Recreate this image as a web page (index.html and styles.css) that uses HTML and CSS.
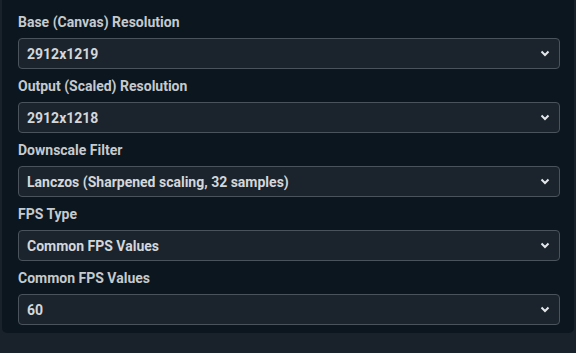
FILE: index.html
```html
<!doctype html>
<html>
<head>
<meta charset="utf-8">
<link rel="stylesheet" href="styles.css">
<title>Video Settings</title>
</head>
<body>
<div class="panel">
  <div class="field">
    <div class="label">Base (Canvas) Resolution</div>
    <div class="select"><span>2912x1219</span><svg class="chev" viewBox="0 0 10 7"><path d="M1.5 1.5 L5 5 L8.5 1.5"/></svg></div>
  </div>
  <div class="field">
    <div class="label">Output (Scaled) Resolution</div>
    <div class="select"><span>2912x1218</span><svg class="chev" viewBox="0 0 10 7"><path d="M1.5 1.5 L5 5 L8.5 1.5"/></svg></div>
  </div>
  <div class="field">
    <div class="label">Downscale Filter</div>
    <div class="select"><span>Lanczos (Sharpened scaling, 32 samples)</span><svg class="chev" viewBox="0 0 10 7"><path d="M1.5 1.5 L5 5 L8.5 1.5"/></svg></div>
  </div>
  <div class="field">
    <div class="label">FPS Type</div>
    <div class="select"><span>Common FPS Values</span><svg class="chev" viewBox="0 0 10 7"><path d="M1.5 1.5 L5 5 L8.5 1.5"/></svg></div>
  </div>
  <div class="field">
    <div class="label">Common FPS Values</div>
    <div class="select"><span>60</span><svg class="chev" viewBox="0 0 10 7"><path d="M1.5 1.5 L5 5 L8.5 1.5"/></svg></div>
  </div>
</div>
</body>
</html>
```
FILE: styles.css
```css
body {
    margin: 0;
    background-color: #19222b;
    font-family: Roboto, "Liberation Sans", sans-serif;
    font-size: 14px;
    font-weight: 700;
}
.panel {
    margin: 0 2px;
    padding: 11px 14px 8px 16px;
    background-color: #0c161e;
    border-radius: 0 0 5px 5px;
}
.field {
    margin-bottom: 6px;
}
.field:last-child {
    margin-bottom: 0;
}
.label {
    color: #c5cace;
    line-height: 20px;
    padding-top: 1px;
    margin-bottom: 6px;
}
.select {
    display: flex;
    align-items: center;
    justify-content: space-between;
    height: 29px;
    padding: 0 9px 0 8px;
    background-color: #1b242d;
    border: 1px solid #4a525b;
    border-radius: 4px;
    color: #d3d7db;
}
.select span {
    padding-top: 1px;
}
.chev {
    width: 10px;
    height: 7px;
    fill: none;
    stroke: #e4e7ea;
    stroke-width: 2;
}
```
